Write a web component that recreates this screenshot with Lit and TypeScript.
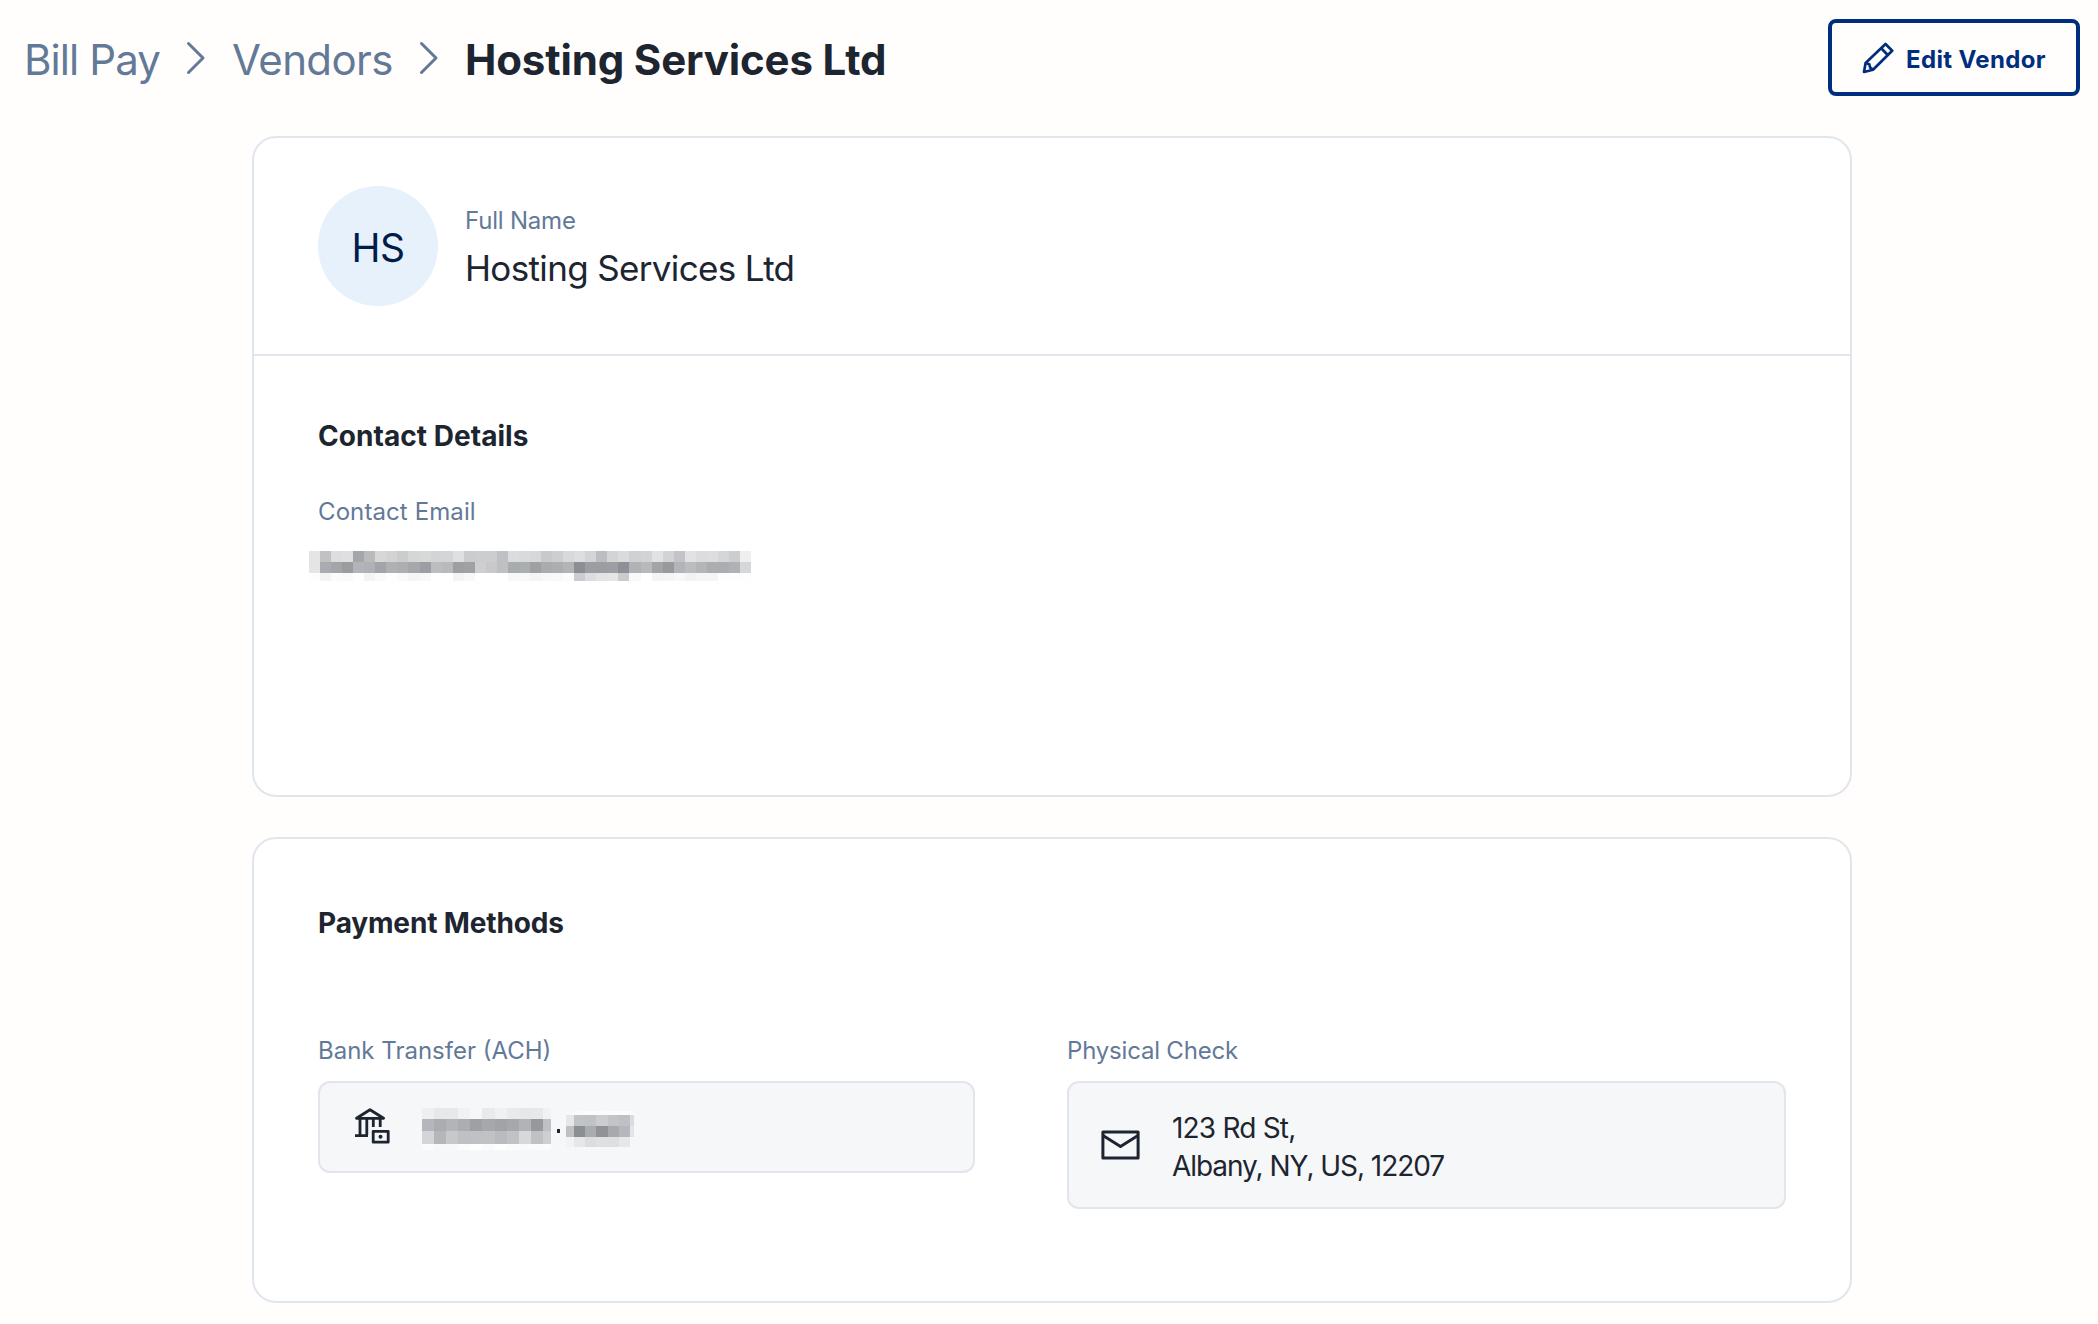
import { LitElement, html, svg, css } from "lit";
import { customElement, property } from "lit/decorators.js";

/** A grid of shaded cells that stands in for redacted text. */
@customElement("redacted-text")
class RedactedText extends LitElement {
  @property({ attribute: false }) cols: number[] = [];
  @property({ attribute: false }) rows: number[] = [];
  @property({ attribute: false }) shades: string[] = [];

  static styles = css`
    :host { display: block; flex: none; line-height: 0; }
    svg { display: block; }
  `;

  render() {
    const w = this.cols[this.cols.length - 1];
    const h = this.rows[this.rows.length - 1];
    return html`<svg width=${w} height=${h} viewBox="0 0 ${w} ${h}" shape-rendering="crispEdges" aria-hidden="true">
      ${this.shades.map((line, r) =>
        line.split(" ").slice(0, this.cols.length - 1).map((c, i) => svg`<rect
          x=${this.cols[i]} y=${this.rows[r]}
          width=${this.cols[i + 1] - this.cols[i]} height=${this.rows[r + 1] - this.rows[r]}
          fill=${"#" + c}></rect>`))}
    </svg>`;
  }
}

const steps = (n: number, w: number) => Array.from({ length: n + 1 }, (_, i) => Math.round(i * w));

const EMAIL = {
  cols: steps(40, 11.05),
  rows: [0, 11, 22, 30],
  shades: [
    "e5e5e5 bfc1c3 dddddf dedfe1 a4a6a9 b8babc d7d7d8 d2d3d5 cacccd d5d7d6 d7d8d8 d3d4d6 d4d5d7 dfe0e2 cbccce cccdcf cccdcf bec0c3 dbdcde d9dadc d6d8d9 c8c9cb cdced0 d8d9db dddee0 d3d4d6 bcbdc0 d3d4d6 dadbdd d0d1d3 d2d3d4 e1e2e3 d2d3d5 c2c4c8 e2e2e4 dcdcde dcdddf d5d6d8 cccdcf eef0f0",
    "e5e5e5 a9abb0 a3a5a8 9b9c9f b3b4b9 b0b1b6 a2a4a8 b0b1b5 adaeb2 a5a7ab 9b9ea3 bcbdc1 b9babe 9da0a3 9fa1a4 cfcfd1 c8c9ca bfc0c2 a8acae abaeb1 9da1a4 a9abaf adaeb2 b3b4b8 8c8e94 9a9ea4 9c9da2 9d9ea3 8f9097 b1b2b6 b8b9bb a1a5a7 97999c b3b4b9 bbbcc0 b3b5b8 abaeb1 aaaeb1 b0b1b6 d6d7d8",
    "fdfdfd f2f4f4 fafbfb fafafb fefefe f3f5f5 f9fafa fefefe fafafa f5f6f6 f9f9fa ffffff ffffff f3f5f5 f8f8f9 ffffff ffffff ffffff f7f9f9 f8f9fa f4f6f6 f7f8f8 f9f9fa fcfcfd cbcccf dcdde0 e2e3e5 e5e5e7 cacbcd f9f9fa ffffff f3f5f5 f4f6f6 f7f8f9 f1f3f3 f5f7f7 f4f6f6 fefefe fdfefe fefefe",
  ],
};

const BANK = {
  cols: [0, 12, 24, 36, 48, 60, 73, 85, 97, 109, 121, 129],
  rows: [0, 11, 23, 36, 42],
  shades: [
    "eeeff1 e7e8ea e7e8ea f1f2f4 f6f7f9 e9eaec f0f1f3 e9eaec e6e7e9 e7e8ea f1f2f4",
    "b3b6bb a9acb1 b2b4b7 aaadb2 9fa0a4 a5a8ac a0a3a8 a7a8ac b1b4b7 95989d bfc0c4",
    "d3d5d9 b5b6ba c7c8cc bfc0c4 c0c1c5 c1c2c6 babbbf c1c2c5 d7d8dc c0c1c4 cecfd3",
    "fafbfc f7f8fa f7f8fa fbfcfd ffffff fafbfc fefeff fafbfc f9fafb fafbfc fafbfc",
  ],
};

const ACCOUNT = {
  cols: [0, 8, 19, 30, 42, 53, 64, 68],
  rows: [0, 4, 15, 26, 36],
  shades: [
    "f7f8fa fafbfc fcfcfd fafbfc fbfcfd fbfcfd fafbfc",
    "e6e7e9 c1c4c6 bfc3c6 cccdd1 c3c4c7 bfc0c4 dbdcdf",
    "bfc0c4 8c8e93 a8abaf 909297 a6a9ad b4b7bb e4e5e7",
    "f2f3f5 e6e7e9 dcdddf dfe0e2 dedfe1 e6e7e9 f6f7f9",
  ],
};

@customElement("app-root")
class AppRoot extends LitElement {
  static styles = css`
    :host {
      display: block;
      box-sizing: border-box;
      min-height: 1324px;
      background: #fffefc;
      color: #1d2530;
      font-family: Inter, "Liberation Sans", sans-serif;
    }
    * { box-sizing: border-box; }
    svg { display: block; flex: none; }
    .top {
      display: flex;
      justify-content: space-between;
      align-items: flex-start;
      padding: 19px 18px 0 24px;
    }
    .crumbs {
      display: flex;
      align-items: center;
      height: 82px;
      font-size: 42px;
      line-height: 82px;
      white-space: nowrap;
      color: #637998;
    }
    .crumb-home { width: 135px; letter-spacing: -0.9px; }
    .crumb-list { width: 160px; letter-spacing: -0.6px; }
    .crumbs svg { margin: -4px 26px 0 27px; }
    .crumb-here { margin: 0; font-size: 42px; font-weight: 700; letter-spacing: -0.15px; color: #1d2530; }
    .edit {
      display: flex;
      align-items: center;
      width: 252px;
      height: 77px;
      padding: 0 0 0 30px;
      border: 4px solid #002e7e;
      border-radius: 8px;
      background: transparent;
      color: #002e7e;
      font: 700 24px/32px Inter, "Liberation Sans", sans-serif;
      letter-spacing: 0.35px;
      white-space: nowrap;
    }
    .edit svg { margin-right: 12px; }
    .edit-label { padding-top: 4px; }
    main {
      display: flex;
      flex-direction: column;
      gap: 40px;
      width: 1600px;
      margin: 35px 0 0 252px;
    }
    .card { border: 2px solid #e2e5ec; border-radius: 24px; background: #ffffff; }
    .vendor { height: 661px; }
    .methods { height: 466px; padding: 64px 64px 0; }
    .identity {
      display: flex;
      align-items: center;
      height: 218px;
      padding-left: 64px;
      border-bottom: 2px solid #e2e5ec;
    }
    .avatar {
      width: 120px;
      height: 120px;
      padding-top: 4px;
      border-radius: 50%;
      background: #e6f1fc;
      color: #001c49;
      font-size: 39px;
      line-height: 116px;
      letter-spacing: -0.6px;
      text-align: center;
    }
    .names { margin-left: 27px; white-space: nowrap; }
    .label { font-size: 24px; line-height: 36px; color: #637998; white-space: nowrap; }
    .names .label { padding-top: 2px; line-height: 42px; letter-spacing: -0.2px; }
    .full { font-size: 35px; line-height: 52px; letter-spacing: -0.65px; }
    .contact { padding: 60px 64px 0; }
    h2 { margin: 0; font-size: 28px; line-height: 40px; font-weight: 700; letter-spacing: 0.05px; }
    .methods h2 { letter-spacing: -0.15px; }
    .contact .label { margin-top: 38px; letter-spacing: 0.1px; }
    .email { margin: 21px 0 0 -9px; }
    .columns {
      display: grid;
      grid-template-columns: 657px 719px;
      column-gap: 92px;
      align-items: start;
      margin-top: 90px;
    }
    .check-label { letter-spacing: -0.2px; }
    .box {
      display: flex;
      align-items: center;
      margin-top: 12px;
      border: 2px solid #e2e5ec;
      border-radius: 12px;
      background: #f6f7f9;
    }
    .ach { height: 92px; padding-left: 35px; }
    .ach svg { margin: -2px 32px 0 0; }
    .ach redacted-text { margin-top: 4px; }
    .dot { width: 3px; height: 4px; margin: 8px 6px 0; background: #1d2530; }
    .check { height: 128px; padding-left: 32px; }
    .check svg { margin-right: 32px; }
    .address { padding-top: 4px; font-size: 28px; line-height: 38px; letter-spacing: -0.8px; white-space: nowrap; }
    .city { letter-spacing: -1.05px; }
  `;

  private chevron() {
    return html`<svg width="20" height="34" viewBox="0 0 20 34" fill="none" stroke="#637998" stroke-width="3" stroke-linecap="round" stroke-linejoin="round"><path d="M2.5 2.5L17 17L2.5 31.5"/></svg>`;
  }

  render() {
    return html`
      <header class="top">
        <nav class="crumbs">
          <span class="crumb-home">Bill Pay</span>
          ${this.chevron()}
          <span class="crumb-list">Vendors</span>
          ${this.chevron()}
          <h1 class="crumb-here">Hosting Services Ltd</h1>
        </nav>
        <button class="edit">
          <svg width="32" height="32" viewBox="0 0 32 32" fill="none" stroke="#002e7e" stroke-width="2.7" stroke-linejoin="round">
            <path d="M2 30L3.6 21L23.5 2L30.2 8.8L11 27.8Z"/>
            <path d="M19.2 6.3L25.8 13M3.6 21L7.2 22.2L8.2 25.6L11 27.8"/>
          </svg>
          <span class="edit-label">Edit Vendor</span>
        </button>
      </header>
      <main>
        <section class="card vendor">
          <div class="identity">
            <div class="avatar">HS</div>
            <div class="names">
              <div class="label">Full Name</div>
              <div class="full">Hosting Services Ltd</div>
            </div>
          </div>
          <div class="contact">
            <h2>Contact Details</h2>
            <div class="label">Contact Email</div>
            <redacted-text class="email" .cols=${EMAIL.cols} .rows=${EMAIL.rows} .shades=${EMAIL.shades}></redacted-text>
          </div>
        </section>
        <section class="card methods">
          <h2>Payment Methods</h2>
          <div class="columns">
            <div>
              <div class="label">Bank Transfer (ACH)</div>
              <div class="box ach">
                <svg width="35" height="36" viewBox="0 0 35 36" fill="none" stroke="#1d2530" stroke-width="2.8" stroke-linejoin="round">
                  <path d="M1.5 10.3L15 1.7L28.6 10.3Z"/>
                  <path d="M5 11V27M11.8 11V27M18.3 11V19M25.2 11V19M0 27.6H13"/>
                  <path d="M18.2 23.3H33.2V34.2H18.2Z"/>
                  <circle cx="25.5" cy="28.8" r="2" fill="#1d2530" stroke="none"/>
                </svg>
                <redacted-text .cols=${BANK.cols} .rows=${BANK.rows} .shades=${BANK.shades}></redacted-text>
                <span class="dot"></span>
                <redacted-text .cols=${ACCOUNT.cols} .rows=${ACCOUNT.rows} .shades=${ACCOUNT.shades}></redacted-text>
              </div>
            </div>
            <div>
              <div class="label check-label">Physical Check</div>
              <div class="box check">
                <svg width="39" height="30" viewBox="0 0 39 30" fill="none" stroke="#1d2530" stroke-width="3" stroke-linejoin="round">
                  <path d="M1.9 1.9H37.1V28H1.9Z"/>
                  <path d="M2 5.5L19.5 16.5L37 5.5"/>
                </svg>
                <div class="address">
                  <div>123 Rd St,</div>
                  <div class="city">Albany, NY, US, 12207</div>
                </div>
              </div>
            </div>
          </div>
        </section>
      </main>
    `;
  }
}
